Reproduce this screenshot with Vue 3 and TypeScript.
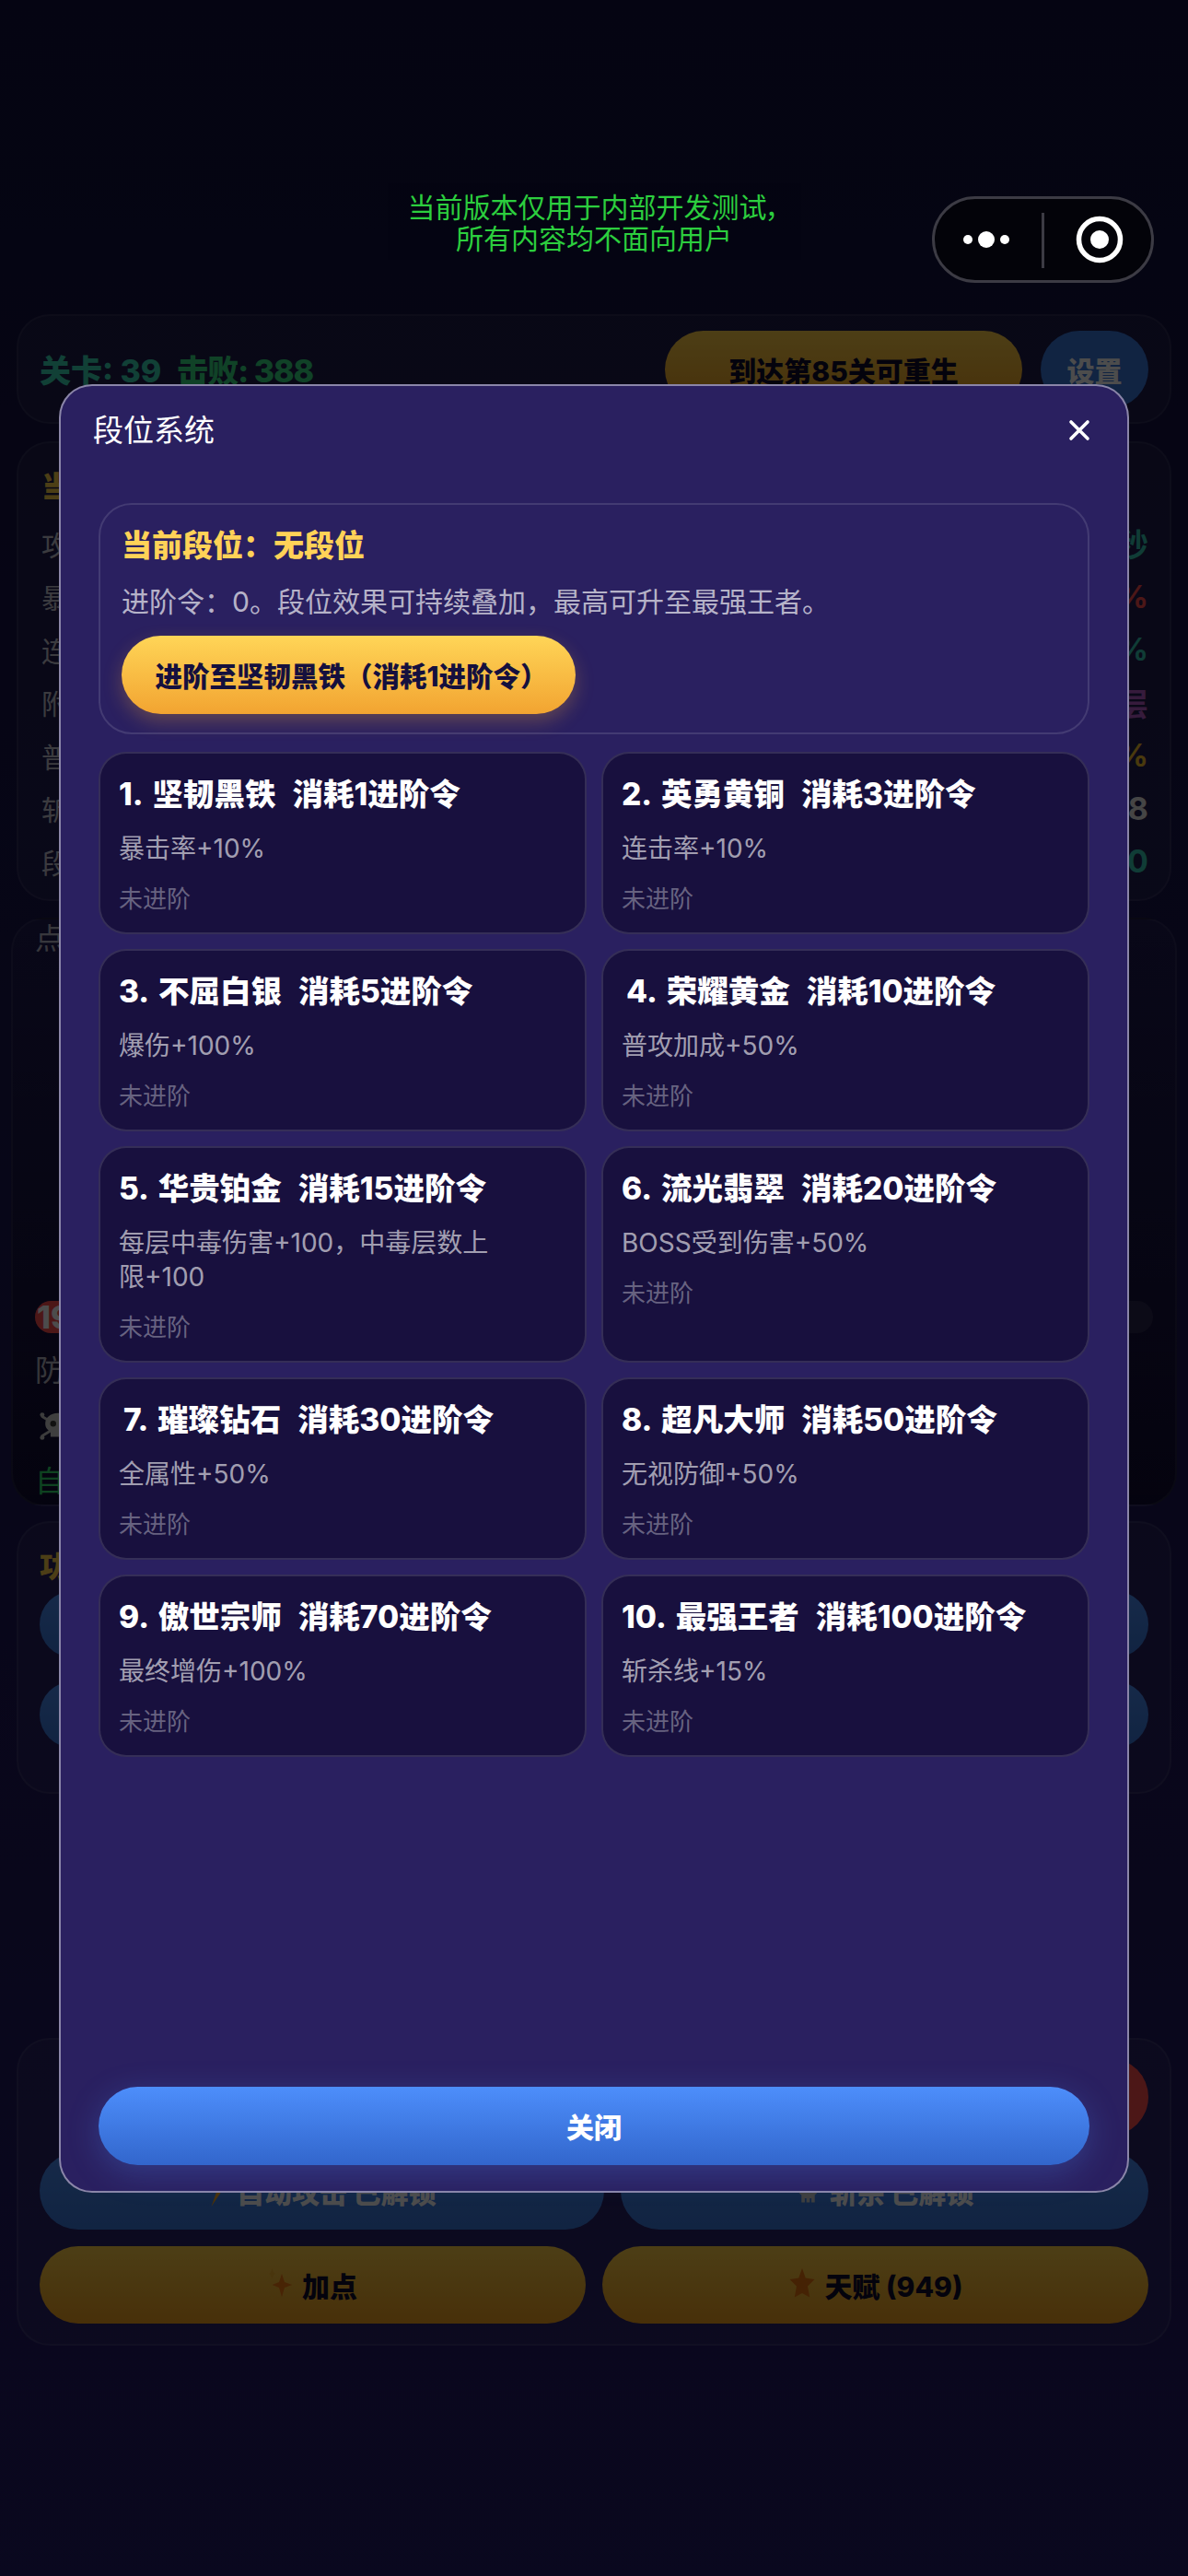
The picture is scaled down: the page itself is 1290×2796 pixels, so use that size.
<script setup lang="ts">
interface Rank {
  title: string;
  cost: string;
  effect: string;
  indent?: boolean; // 4、7 的数字字形偏窄，整行右移一点
}

const ranks: Rank[] = [
  { title: "1. 坚韧黑铁", cost: "消耗1进阶令", effect: "暴击率+10%" },
  { title: "2. 英勇黄铜", cost: "消耗3进阶令", effect: "连击率+10%" },
  { title: "3. 不屈白银", cost: "消耗5进阶令", effect: "爆伤+100%" },
  { title: "4. 荣耀黄金", cost: "消耗10进阶令", effect: "普攻加成+50%", indent: true },
  { title: "5. 华贵铂金", cost: "消耗15进阶令", effect: "每层中毒伤害+100，中毒层数上限+100" },
  { title: "6. 流光翡翠", cost: "消耗20进阶令", effect: "BOSS受到伤害+50%" },
  { title: "7. 璀璨钻石", cost: "消耗30进阶令", effect: "全属性+50%", indent: true },
  { title: "8. 超凡大师", cost: "消耗50进阶令", effect: "无视防御+50%" },
  { title: "9. 傲世宗师", cost: "消耗70进阶令", effect: "最终增伤+100%" },
  { title: "10. 最强王者", cost: "消耗100进阶令", effect: "斩杀线+15%" },
];

// 被弹窗遮住的属性行，只露出两端
const stats = [
  { label: "攻击", value: "秒", tone: "teal" },
  { label: "暴击", value: "%", tone: "crimson" },
  { label: "连击", value: "%", tone: "teal" },
  { label: "附加", value: "层", tone: "purple" },
  { label: "普攻", value: "%", tone: "amber" },
  { label: "斩杀", value: "8", tone: "plain" },
  { label: "段位", value: "0", tone: "teal" },
];

const hpPercent = 40;
</script>

<template>
  <div class="page">
    <div class="game">
      <section class="panel top-panel">
        <div class="level">
          <span>关卡: 39</span>
          <span class="kills">击败: 388</span>
        </div>
        <button class="btn gold rebirth">到达第85关可重生</button>
        <button class="btn blue settings">设置</button>
      </section>

      <section class="panel stat-panel">
        <div class="panel-title">当前属性</div>
        <div v-for="s in stats" :key="s.label" class="stat-row">
          <span>{{ s.label }}</span>
          <span class="stat-value" :class="s.tone">{{ s.value }}</span>
        </div>
      </section>

      <section class="panel battle-panel">
        <div class="hint">点击</div>
        <div class="arena"></div>
        <div class="hp">
          <div class="hp-fill" :style="{ width: hpPercent + '%' }"></div>
          <span class="hp-text">19</span>
        </div>
        <div class="battle-line">防御</div>
        <div class="battle-line">
          <svg class="skull" viewBox="0 0 42 34">
            <g stroke="#c8c8c8" stroke-width="3" stroke-linecap="round">
              <path d="M3 6 39 28M3 28 39 6" />
            </g>
            <circle cx="3" cy="4" r="2.600" fill="#c8c8c8" />
            <circle cx="3" cy="30" r="2.600" fill="#c8c8c8" />
            <path d="M21 2C12 2 6.500 7.500 6.500 14c0 4.500 2.500 7.500 6 9v6h17v-6c3.500-1.500 6-4.500 6-9C35.500 7.500 30 2 21 2z" fill="#d4d4d4" />
            <circle cx="15.500" cy="14" r="3.400" fill="#3a3a3a" /><circle cx="26.500" cy="14" r="3.400" fill="#3a3a3a" />
          </svg>
        </div>
        <div class="battle-line auto">自动</div>
      </section>

      <section class="panel func-panel">
        <div class="panel-title">功能</div>
        <div class="func-row"><button class="btn blue"></button><button class="btn blue"></button></div>
        <div class="func-row"><button class="btn blue"></button><button class="btn blue"></button></div>
      </section>

      <div class="blank"></div>

      <section class="panel action-panel">
        <div class="action-row end"><button class="btn danger"></button></div>
        <div class="action-row unlocks">
          <button class="btn blue wide">
            <svg class="ico" viewBox="0 0 24 40"><path d="M16 1 3 22h8L5 39 21 15h-8z" fill="#f5a623" /></svg>
            自动攻击 已解锁
          </button>
          <button class="btn blue">
            <svg class="ico" viewBox="0 0 30 40">
              <path d="M15 2C7 2 2 8 2 15c0 5 2 8 5 10v9h4v-5h2v5h4v-5h2v5h4v-9c3-2 5-5 5-10 0-7-5-13-13-13z" fill="#d0d0d0" />
              <circle cx="9" cy="16" r="3.600" fill="#333" /><circle cx="21" cy="16" r="3.600" fill="#333" />
            </svg>
            斩杀 已解锁
          </button>
        </div>
        <div class="action-row">
          <button class="btn gold">
            <svg class="ico" viewBox="0 0 36 48">
              <path d="M20 8 24 20 35 24 24 28 20 42 16 28 6 24 16 20z" fill="#f07a13" />
              <path d="M6 0 8 6 11 8 8 10 6 16 4 10 1 8 4 6z M6 36 7.500 40 10 42 7.500 44 6 48 4.500 44 2 42 4.500 40z" fill="#f5b12e" />
            </svg>
            加点
          </button>
          <button class="btn gold">
            <svg class="ico" viewBox="0 0 40 48">
              <path d="M20 0 25 14 38 16 28 26 31 42 20 36 9 42 12 26 2 16 15 14z" fill="#e8740f" />
            </svg>
            天赋 (949)
          </button>
        </div>
      </section>
    </div>

    <div class="mask">
      <div class="modal">
        <header class="modal-head">
          <span class="modal-title">段位系统</span>
          <svg class="close" viewBox="0 0 24 24" aria-label="关闭">
            <path d="M3 3 21 21M21 3 3 21" stroke="#fff" stroke-width="3.600" stroke-linecap="round" fill="none" />
          </svg>
        </header>

        <div class="modal-body">
          <div class="hero">
            <div class="hero-title">当前段位：无段位</div>
            <div class="hero-desc">进阶令：0。段位效果可持续叠加，最高可升至最强王者。</div>
            <button class="promote">进阶至坚韧黑铁（消耗1进阶令）</button>
          </div>

          <div class="rank-grid">
            <div v-for="r in ranks" :key="r.title" class="rank-card">
              <div class="rank-title" :class="{ indent: r.indent }">
                <span>{{ r.title }}</span>
                <span>{{ r.cost }}</span>
              </div>
              <div class="rank-effect">{{ r.effect }}</div>
              <div class="rank-state">未进阶</div>
            </div>
          </div>
        </div>

        <footer class="modal-foot">
          <button class="close-btn">关闭</button>
        </footer>
      </div>
    </div>

    <div class="native-bar">
      <div class="dev-notice">当前版本仅用于内部开发测试，<br />所有内容均不面向用户</div>
      <div class="capsule">
        <svg class="capsule-icon" viewBox="0 0 241 94">
          <circle cx="39" cy="47" r="5" fill="#fff" />
          <circle cx="59" cy="47" r="9" fill="#fff" />
          <circle cx="79" cy="47" r="5" fill="#fff" />
          <rect x="119" y="18" width="3" height="60" fill="#3c3b44" />
          <circle cx="182" cy="47" r="22.500" fill="none" stroke="#fff" stroke-width="5.500" />
          <circle cx="182" cy="47" r="10" fill="#fff" />
        </svg>
      </div>
    </div>
  </div>
</template>

<style>
html,
body {
  margin: 0;
  background: #0a081f;
}
</style>

<style scoped>
.page {
  position: relative;
  width: 1290px;
  height: 2796px;
  overflow: hidden;
  font-family: Inter, "Noto Sans CJK SC", sans-serif;
  background: linear-gradient(180deg, #11103c 0%, #241b68 100%);
  color: #fff;
}

button {
  border: none;
  font-family: inherit;
  padding: 0;
}

.game {
  display: flex;
  flex-direction: column;
  padding: 341px 18px 0;
  gap: 18px;
}

.panel {
  box-sizing: border-box;
  border: 2px solid rgba(255, 255, 255, 0.07);
  border-radius: 36px;
  background: rgba(255, 255, 255, 0.045);
}

.btn {
  display: flex;
  align-items: center;
  justify-content: center;
  gap: 10px;
  height: 84px;
  border-radius: 42px;
  font-size: 30px;
  font-weight: 800;
}

.gold {
  background: linear-gradient(180deg, #ffd04a, #f0a020);
  color: #0e0a2c;
}

.blue {
  background: linear-gradient(180deg, #4a8cf5, #3a78dc);
  color: #fff;
}

.danger {
  background: #ff4d4d;
}

.ico {
  height: 36px;
  width: auto;
}

.top-panel {
  display: flex;
  align-items: center;
  height: 119px;
  padding: 0 23px;
  margin-bottom: 1px;
}

.level {
  display: flex;
  gap: 17px;
  flex: 1;
  font-size: 34px;
  font-weight: 800;
  color: #3ad6b6;
}

.kills {
  color: #38dc84;
  letter-spacing: -1px;
}

.rebirth {
  width: 388px;
}

.settings {
  width: 117px;
  margin-left: 20px;
  background: #3a78dc;
  color: #fff;
}

.stat-panel {
  height: 499px;
  padding: 26px 23px 0 25px;
}

.panel-title {
  font-size: 32px;
  font-weight: 800;
  line-height: 44px;
  color: #ffd04a;
}

.stat-row {
  display: flex;
  justify-content: space-between;
  align-items: center;
  height: 57.500px;
  font-size: 30px;
  color: rgba(255, 255, 255, 0.75);
}

.panel-title + .stat-row {
  margin-top: 10px;
}

.stat-value {
  font-size: 34px;
  font-weight: 700;
}

.teal {
  color: #36c9b4;
}

.crimson {
  color: #ff4d4d;
}

.purple {
  color: #b45cc8;
}

.amber {
  color: #f5c02e;
}

.plain {
  color: #e6e6e6;
}

.battle-panel {
  display: flex;
  flex-direction: column;
  height: 639px;
  margin: 0 -6px;
  padding: 0 24px;
  background: linear-gradient(180deg, rgba(255, 255, 255, 0.03), rgba(0, 0, 0, 0.4));
}

.hint,
.battle-line {
  height: 42px;
  line-height: 42px;
  font-size: 32px;
  color: rgba(255, 255, 255, 0.7);
}

.arena {
  height: 372px;
}

.hp {
  position: relative;
  height: 35px;
  border-radius: 18px;
  background: rgba(255, 255, 255, 0.09);
  overflow: hidden;
}

.hp-fill {
  height: 100%;
  background: #ff4d4d;
}

.hp-text {
  position: absolute;
  left: 2px;
  top: 0;
  line-height: 35px;
  font-size: 34px;
  font-weight: 800;
  color: #fff;
}

.hp + .battle-line {
  margin-top: 20px;
}

.battle-line + .battle-line {
  margin-top: 18px;
}

.skull {
  display: block;
  width: 40px;
  height: 34px;
  margin: 4px 0 0 5px;
}

.auto {
  color: #2fdc6c;
}

.func-panel {
  height: 296px;
  margin-top: -2px;
  padding: 26px 23px 0;
}

.func-row,
.action-row {
  display: flex;
  gap: 18px;
}

.func-row .btn {
  flex: 1;
  height: 72px;
}

.func-row + .func-row {
  margin-top: 26px;
}

.func-panel .panel-title {
  margin-bottom: 4px;
}

.blank {
  height: 229px;
}

.action-panel {
  display: flex;
  flex-direction: column;
  height: 334px;
  padding: 20px 23px 0;
  gap: 18px;
}

.action-row .btn {
  flex: 1;
}

.action-row.end {
  justify-content: flex-end;
}

.action-row.end .btn {
  flex: 0 0 572px;
}

.unlocks .wide {
  flex: 0 0 613px;
}

.mask {
  position: absolute;
  inset: 0;
  display: flex;
  align-items: center;
  justify-content: center;
  background: rgba(0, 0, 0, 0.7);
}

.modal {
  box-sizing: border-box;
  display: flex;
  flex-direction: column;
  width: 1162px;
  height: 1963px;
  border: 2px solid rgba(255, 255, 255, 0.46);
  border-radius: 36px;
  background: #2a2060;
}

.modal-head {
  display: flex;
  align-items: center;
  justify-content: space-between;
  padding: 26px 40px 31px 35px;
}

.modal-title {
  font-size: 33px;
  line-height: 45px;
}

.close {
  width: 24px;
  height: 24px;
}

.modal-body {
  flex: 1;
  padding: 25px 41px 0;
}

.hero {
  box-sizing: border-box;
  height: 251px;
  padding: 22px 23px;
  border: 2px solid rgba(255, 255, 255, 0.12);
  border-radius: 36px;
}

.hero-title {
  font-size: 33px;
  font-weight: 800;
  line-height: 45px;
  color: #ffd257;
}

.hero-desc {
  margin-top: 17px;
  font-size: 30px;
  line-height: 42px;
  color: rgba(255, 255, 255, 0.68);
}

.promote {
  display: block;
  width: 493px;
  height: 85px;
  margin-top: 16px;
  padding-left: 6px;
  border-radius: 43px;
  font-size: 29.500px;
  font-weight: 800;
  color: #15103e;
  background: linear-gradient(180deg, #ffd557, #f2a431);
  box-shadow: 0 8px 20px rgba(242, 164, 49, 0.28);
}

.rank-grid {
  display: grid;
  grid-template-columns: 1fr 1fr;
  gap: 16px;
  margin-top: 19px;
}

.rank-card {
  box-sizing: border-box;
  padding: 22px 20px 18px;
  border: 2px solid rgba(255, 255, 255, 0.13);
  border-radius: 30px;
  background: #18103e;
}

.rank-title {
  display: flex;
  gap: 18px;
  font-size: 33.500px;
  font-weight: 800;
  line-height: 45px;
  word-spacing: 4px;
}

.rank-title.indent {
  margin-left: 5px;
}

.rank-effect {
  max-width: 420px;
  margin-top: 18px;
  font-size: 28px;
  line-height: 37px;
  color: rgba(255, 255, 255, 0.62);
}

.rank-state {
  margin-top: 18px;
  font-size: 26px;
  line-height: 36px;
  color: rgba(255, 255, 255, 0.36);
}

.modal-foot {
  padding: 0 41px 28px;
}

.close-btn {
  display: block;
  width: 100%;
  height: 85px;
  border-radius: 43px;
  font-size: 30px;
  font-weight: 800;
  color: #fff;
  background: linear-gradient(180deg, #4d8efb, #3266cc);
  box-shadow: 0 8px 34px rgba(77, 142, 251, 0.26);
}

.native-bar {
  position: absolute;
  top: 199px;
  left: 0;
  right: 0;
  display: flex;
  justify-content: center;
}

.dev-notice {
  padding: 9px 22px 6px;
  font-size: 30px;
  line-height: 34px;
  text-align: center;
  color: #2cce3e;
  background: rgba(0, 0, 0, 0.04);
  font-feature-settings: "palt";
}

.capsule {
  position: absolute;
  top: 14px;
  right: 37px;
  box-sizing: border-box;
  width: 241px;
  height: 94px;
  border: 3px solid #3c3b44;
  border-radius: 47px;
  background: #030309;
}

.capsule-icon {
  position: absolute;
  inset: -3px;
  width: 241px;
  height: 94px;
}
</style>
